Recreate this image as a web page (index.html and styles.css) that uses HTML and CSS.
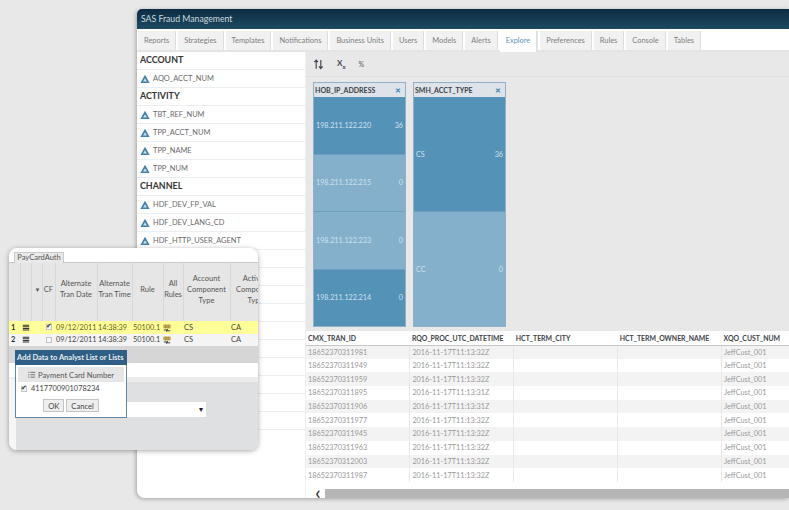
FILE: index.html
```html
<!DOCTYPE html>
<html lang="en">
<head>
    <meta charset="UTF-8">
    <title>SAS Fraud Management</title>
    <link rel="stylesheet" href="styles.css">
</head>
<body>
    <svg class="sprites" width="0" height="0">
        <symbol id="tri" viewBox="0 0 10 10">
            <path d="M5 .8 9.6 9H.4z" fill="#3f7fa8"/>
            <path d="M5 4.200 7 7.600H3z" fill="#cfe2ee"/>
        </symbol>
        <symbol id="lines" viewBox="0 0 10 10">
            <path d="M1 1.500h8M1 3.500h8M1 5.500h8M1 7.500h8" stroke="#333" stroke-width="1.300"/>
        </symbol>
        <symbol id="head-lines" viewBox="0 0 10 10">
            <path d="M1 1v1.500M1 4v1.500M1 7v1.500M3 1.700h6M3 4.700h6M3 7.700h6" stroke="#555" stroke-width="1"/>
        </symbol>
        <symbol id="rules" viewBox="0 0 10 10">
            <path d="M.5 .5h9v5h-9z" fill="#d9b65a"/>
            <path d="M.5 2.200h9M.5 4h9M3.500 .5v5M6.500 .5v5" stroke="#8a7a3a" stroke-width=".6"/>
            <path d="M1 7.500h5l-1-1M9 8.500H4l1 1" stroke="#223" stroke-width="1.100" fill="none"/>
        </symbol>
    </svg>

    <div class="window">
        <div class="titlebar">SAS Fraud Management</div>
        <div class="tabs">
            <span class="tab">Reports</span>
            <span class="tab">Strategies</span>
            <span class="tab">Templates</span>
            <span class="tab">Notifications</span>
            <span class="tab">Business Units</span>
            <span class="tab">Users</span>
            <span class="tab">Models</span>
            <span class="tab">Alerts</span>
            <span class="tab active">Explore</span>
            <span class="tab">Preferences</span>
            <span class="tab">Rules</span>
            <span class="tab">Console</span>
            <span class="tab">Tables</span>
        </div>

        <div class="main">
            <div class="sidebar">
                <div class="group">ACCOUNT</div>
                <div class="field"><svg class="tri"><use href="#tri"/></svg>AQO_ACCT_NUM</div>
                <div class="group">ACTIVITY</div>
                <div class="field"><svg class="tri"><use href="#tri"/></svg>TBT_REF_NUM</div>
                <div class="field"><svg class="tri"><use href="#tri"/></svg>TPP_ACCT_NUM</div>
                <div class="field"><svg class="tri"><use href="#tri"/></svg>TPP_NAME</div>
                <div class="field"><svg class="tri"><use href="#tri"/></svg>TPP_NUM</div>
                <div class="group">CHANNEL</div>
                <div class="field"><svg class="tri"><use href="#tri"/></svg>HDF_DEV_FP_VAL</div>
                <div class="field"><svg class="tri"><use href="#tri"/></svg>HDF_DEV_LANG_CD</div>
                <div class="field"><svg class="tri"><use href="#tri"/></svg>HDF_HTTP_USER_AGENT</div>
                <div class="field"></div>
                <div class="field"></div>
                <div class="field"></div>
                <div class="field"></div>
                <div class="field"></div>
                <div class="field"></div>
                <div class="field"></div>
                <div class="field"></div>
                <div class="field"></div>
                <div class="field"></div>
            </div>

            <div class="content">
                <div class="toolbar">
                    <svg class="tool" viewBox="0 0 12 12"><path d="M3.500 1.500v9M1.500 3.500l2-2.200 2 2.200M8.500 1v9M6.500 8l2 2.500 2-2.500" stroke="#445" stroke-width="1.300" fill="none"/></svg>
                    <span class="tool-x">X<sub>x</sub></span>
                    <span class="tool-pct">%</span>
                </div>

                <div class="charts">
                    <div class="chart">
                        <div class="chart-head"><span>HOB_IP_ADDRESS</span><span class="close">✕</span></div>
                        <div class="bar dark"><span>198.211.122.220</span><span>36</span></div>
                        <div class="bar light"><span>198.211.122.215</span><span>0</span></div>
                        <div class="bar light"><span>198.211.122.233</span><span>0</span></div>
                        <div class="bar dark"><span>198.211.122.214</span><span>0</span></div>
                    </div>
                    <div class="chart">
                        <div class="chart-head"><span>SMH_ACCT_TYPE</span><span class="close">✕</span></div>
                        <div class="bar dark"><span>CS</span><span>36</span></div>
                        <div class="bar light"><span>CC</span><span>0</span></div>
                    </div>
                </div>

                <table class="results">
                    <thead>
                        <tr><th>CMX_TRAN_ID</th><th>RQO_PROC_UTC_DATETIME</th><th>HCT_TERM_CITY</th><th>HCT_TERM_OWNER_NAME</th><th>XQO_CUST_NUM</th></tr>
                    </thead>
                    <tbody>
                        <tr><td>18652370311981</td><td>2016-11-17T11:13:32Z</td><td></td><td></td><td>JeffCust_001</td></tr>
                        <tr><td>18652370311949</td><td>2016-11-17T11:13:32Z</td><td></td><td></td><td>JeffCust_001</td></tr>
                        <tr><td>18652370311959</td><td>2016-11-17T11:13:32Z</td><td></td><td></td><td>JeffCust_001</td></tr>
                        <tr><td>18652370311895</td><td>2016-11-17T11:13:31Z</td><td></td><td></td><td>JeffCust_001</td></tr>
                        <tr><td>18652370311906</td><td>2016-11-17T11:13:31Z</td><td></td><td></td><td>JeffCust_001</td></tr>
                        <tr><td>18652370311977</td><td>2016-11-17T11:13:32Z</td><td></td><td></td><td>JeffCust_001</td></tr>
                        <tr><td>18652370311945</td><td>2016-11-17T11:13:32Z</td><td></td><td></td><td>JeffCust_001</td></tr>
                        <tr><td>18652370311963</td><td>2016-11-17T11:13:32Z</td><td></td><td></td><td>JeffCust_001</td></tr>
                        <tr><td>18652370312003</td><td>2016-11-17T11:13:32Z</td><td></td><td></td><td>JeffCust_001</td></tr>
                        <tr><td>18652370311987</td><td>2016-11-17T11:13:32Z</td><td></td><td></td><td>JeffCust_001</td></tr>
                    </tbody>
                </table>

                <div class="scrollbar">
                    <span class="scroll-arrow">❮</span>
                    <div class="scroll-thumb"></div>
                </div>
            </div>
        </div>
    </div>

    <div class="popup">
        <div class="popup-tabs"><span class="popup-tab">PayCardAuth</span></div>
        <table class="auth">
            <thead>
                <tr>
                    <th class="c-num"></th>
                    <th class="c-menu"></th>
                    <th class="c-filter">▼</th>
                    <th class="c-cf">CF</th>
                    <th class="c-date">Alternate<br>Tran Date</th>
                    <th class="c-time">Alternate<br>Tran Time</th>
                    <th class="c-rule">Rule</th>
                    <th class="c-all">All<br>Rules</th>
                    <th class="c-type">Account<br>Component<br>Type</th>
                    <th class="c-act">Activity<br>Component<br>Type</th>
                </tr>
            </thead>
            <tbody>
                <tr class="selected">
                    <td class="num">1</td>
                    <td><svg class="ico"><use href="#lines"/></svg></td>
                    <td></td>
                    <td class="mid"><input type="checkbox" checked></td>
                    <td class="val">09/12/2011</td>
                    <td class="val">14:38:39</td>
                    <td class="val">50100.1</td>
                    <td class="mid"><svg class="ico"><use href="#rules"/></svg></td>
                    <td class="code">CS</td>
                    <td class="code">CA</td>
                </tr>
                <tr>
                    <td class="num">2</td>
                    <td><svg class="ico"><use href="#lines"/></svg></td>
                    <td></td>
                    <td class="mid"><input type="checkbox"></td>
                    <td class="val">09/12/2011</td>
                    <td class="val">14:38:39</td>
                    <td class="val">50100.1</td>
                    <td class="mid"><svg class="ico"><use href="#rules"/></svg></td>
                    <td class="code">CS</td>
                    <td class="code">CA</td>
                </tr>
            </tbody>
        </table>
        <div class="popup-strip"></div>
        <div class="popup-white"></div>
        <div class="popup-lower">
            <div class="select">▾</div>
        </div>
    </div>

    <div class="dialog">
        <div class="dialog-title">Add Data to Analyst List or Lists</div>
        <div class="dialog-body">
            <div class="dialog-head"><svg class="ico"><use href="#head-lines"/></svg>Payment Card Number</div>
            <label class="dialog-row"><input type="checkbox" checked>4117700901078234</label>
            <div class="dialog-btns">
                <button>OK</button>
                <button>Cancel</button>
            </div>
        </div>
    </div>
</body>
</html>
```

FILE: styles.css
```css
* {
    margin: 0;
    padding: 0;
    box-sizing: border-box;
}

html, body {
    height: 100%;
}

body {
    position: relative;
    overflow: hidden;
    background-color: #e8e8e8;
    font-family: Lato, "Liberation Sans", sans-serif;
    color: #444;
}

.sprites {
    position: absolute;
}

input[type="checkbox"] {
    appearance: none;
    display: block;
    position: relative;
    width: 6px;
    height: 6px;
    background-color: #f6f6f6;
    border: 1px solid #c4c4c4;
}

input[type="checkbox"]:checked::before {
    content: "✔";
    position: absolute;
    left: -1px;
    top: -3px;
    font-size: 7px;
    line-height: 8px;
    color: #333;
}

/* main window */
.window {
    position: absolute;
    left: 137px;
    top: 9px;
    width: 652px;
    height: 489px;
    display: flex;
    flex-direction: column;
    background-color: #e8e8e8;
    border-radius: 5px 0 0 8px;
    box-shadow: -1px 1px 4px rgba(0, 0, 0, 0.3);
    overflow: hidden;
}

.titlebar {
    height: 20px;
    line-height: 20px;
    padding-left: 4px;
    background: linear-gradient(#0c2c42, #1c4a63);
    color: #cfd8de;
    font-size: 8.700px;
}

.tabs {
    display: flex;
    height: 23px;
    padding: 2px 0 0 1px;
    gap: 2px;
    background-color: #fff;
    border-bottom: 2px solid #e4e4e4;
}

.tab {
    padding: 0 6px;
    height: 19px;
    line-height: 19px;
    background-color: #f1f1f1;
    border-right: 1px solid #ddd;
    font-size: 7.450px;
    color: #808080;
    white-space: nowrap;
}

.tab.active {
    height: 21px;
    background-color: #fff;
    color: #5b97bd;
    border-right: 2px solid #dfe3e6;
}

.main {
    flex: 1;
    display: flex;
    min-height: 0;
}

.sidebar {
    width: 169px;
    flex-shrink: 0;
    background-color: #fff;
    border-right: 1px solid #eee;
    overflow: hidden;
}

.group,
.field {
    height: 18px;
    line-height: 16px;
    background-color: #fff;
    border-bottom: 1px solid #e9eef2;
}

.group {
    padding-left: 3px;
    font-size: 8.900px;
    font-weight: 700;
    color: #333;
}

.field {
    display: flex;
    align-items: center;
    gap: 3px;
    padding-left: 3px;
    font-size: 7.450px;
    color: #6a6a6a;
}

.tri {
    width: 10px;
    height: 10px;
}

.content {
    flex: 1;
    min-width: 0;
    display: flex;
    flex-direction: column;
}

.toolbar {
    height: 25px;
    display: flex;
    align-items: center;
    gap: 13px;
    padding-left: 7px;
    border-bottom: 1px solid #e0e0e0;
}

.tool {
    width: 11px;
    height: 11px;
}

.tool-x {
    font-size: 8px;
    font-weight: 700;
    color: #445;
}

.tool-x sub {
    font-size: 6px;
}

.tool-pct {
    font-size: 7px;
    color: #556;
}

.charts {
    display: flex;
    gap: 7px;
    height: 245px;
    padding: 5px 0 0 7px;
}

.chart {
    width: 93px;
    height: 245px;
    display: flex;
    flex-direction: column;
    border: 1px solid #8fb0c6;
}

.chart-head {
    height: 14px;
    flex-shrink: 0;
    display: flex;
    justify-content: space-between;
    align-items: center;
    padding: 0 4px 0 1px;
    background-color: #dde3e8;
    font-size: 7px;
    font-weight: 700;
    color: #3a3f45;
}

.close {
    color: #3f85b5;
    font-size: 7px;
    font-weight: 700;
}

.bar {
    flex: 1;
    display: flex;
    justify-content: space-between;
    align-items: center;
    padding: 0 2px 0 2px;
    font-size: 7.200px;
    color: #cfe1ec;
}

.bar + .bar {
    border-top: 1px solid #6f9fbe;
}

.dark {
    background-color: #5592b8;
}

.light {
    background-color: #85b0cb;
}

.results {
    width: 520px;
    flex-shrink: 0;
    margin-top: 9px;
    border-collapse: collapse;
    table-layout: fixed;
    background-color: #fff;
    font-size: 7.300px;
}

.results th {
    height: 14px;
    padding-left: 2px;
    text-align: left;
    font-size: 6.900px;
    font-weight: 700;
    color: #3c4146;
    background-color: #fff;
    border-bottom: 1px solid #c6c6c6;
    white-space: nowrap;
}

.results td {
    height: 13.700px;
    padding-left: 2px;
    color: #999;
    border-right: 1px solid #e8e8e8;
    white-space: nowrap;
}

.results tbody tr:nth-child(odd) {
    background-color: #f3f3f3;
}

.scrollbar {
    flex: 1;
    display: flex;
    align-items: flex-end;
    background-color: #fff;
}

.scroll-arrow {
    width: 19px;
    height: 9px;
    line-height: 9px;
    text-align: right;
    padding-right: 4px;
    font-size: 7px;
    color: #222;
}

.scroll-thumb {
    flex: 1;
    height: 9px;
    background-color: #b5b5b5;
}

/* floating PayCardAuth panel */
.popup {
    position: absolute;
    left: 9px;
    top: 248px;
    width: 249px;
    height: 202px;
    display: flex;
    flex-direction: column;
    overflow: hidden;
    background-color: #fff;
    border-radius: 8px;
    box-shadow: 0 1px 5px rgba(0, 0, 0, 0.35);
}

.popup-tabs {
    height: 15px;
    flex-shrink: 0;
    padding: 4px 0 0 5px;
    border-bottom: 1px solid #c9c9c9;
}

.popup-tab {
    display: block;
    width: 50px;
    height: 11px;
    line-height: 10px;
    text-align: center;
    background-color: #e9e9e9;
    border: 1px solid #c9c9c9;
    border-bottom: none;
    font-size: 7.500px;
    color: #555;
}

.auth {
    width: 272px;
    border-collapse: collapse;
    table-layout: fixed;
    font-size: 7.500px;
    color: #444;
    flex-shrink: 0;
}

.auth th {
    height: 58px;
    padding: 0 0 6px;
    background-color: #e6e6e6;
    border-right: 1px solid #d8d8d8;
    font-weight: 400;
    font-size: 7.500px;
    line-height: 11px;
    color: #555;
    white-space: nowrap;
}

.auth td {
    height: 12.500px;
    padding-left: 2px;
    white-space: nowrap;
    background-color: #f4f4f4;
}

.auth td.val {
    padding-left: 1px;
    font-size: 7.300px;
}

.auth .selected td {
    background-color: #ffff99;
    color: #665f20;
}

.auth td.mid {
    padding: 0;
}

.auth td.mid input {
    margin: 0 0 0 4px;
}

.auth td.num {
    font-weight: 700;
    color: #333;
}

.auth td.code {
    padding-left: 1px;
    color: #444;
}

.c-num { width: 11px; }
.c-menu { width: 11px; }
.auth th.c-filter { width: 11px; font-size: 6px; text-align: right; padding-right: 1px; }
.c-cf { width: 13px; }
.c-date { width: 42px; }
.c-time { width: 35px; }
.c-rule { width: 31px; }
.c-all { width: 20px; }
.c-type { width: 47px; }
.c-act { width: 51px; }

.ico {
    width: 8px;
    height: 8px;
    vertical-align: middle;
}

.popup-strip {
    height: 17px;
    flex-shrink: 0;
    background-color: #d6d6d6;
}

.popup-white {
    height: 14px;
    flex-shrink: 0;
    background-color: #fff;
}

.popup-lower {
    flex: 1;
    padding: 20px 0 0 0;
    background-color: #dfe0e2;
    border-top: 5px solid #ececec;
    border-left: 7px solid #f6f6f6;
}

.select {
    width: 190px;
    height: 15px;
    line-height: 15px;
    padding-right: 3px;
    text-align: right;
    background-color: #fff;
    font-size: 8px;
    color: #222;
}

/* add to list dialog */
.dialog {
    position: absolute;
    left: 15px;
    top: 350px;
    width: 112px;
    height: 68px;
    display: flex;
    flex-direction: column;
    background-color: #fff;
    border: 1px solid #5f88a6;
    border-top: none;
}

.dialog-title {
    height: 15px;
    line-height: 15px;
    margin: 0 -1px;
    padding-left: 2px;
    background-color: #2f5f84;
    color: #e6edf2;
    font-size: 7.500px;
    font-weight: 700;
    white-space: nowrap;
}

.dialog-body {
    flex: 1;
    padding: 2px 2px 0;
}

.dialog-head {
    display: flex;
    align-items: center;
    justify-content: center;
    gap: 2px;
    height: 15px;
    background-color: #e6e6e6;
    font-size: 7.600px;
    color: #555;
}

.dialog-row {
    display: flex;
    align-items: center;
    gap: 4px;
    height: 13px;
    padding-left: 3px;
    font-size: 7.400px;
    color: #444;
}

.dialog-btns {
    display: flex;
    justify-content: center;
    gap: 2px;
    margin-top: 4px;
}

.dialog-btns button {
    height: 13px;
    padding: 0 4px;
    background-color: #eee;
    border: 1px solid #c4c4c4;
    font-family: inherit;
    font-size: 7.600px;
    color: #444;
}
```
